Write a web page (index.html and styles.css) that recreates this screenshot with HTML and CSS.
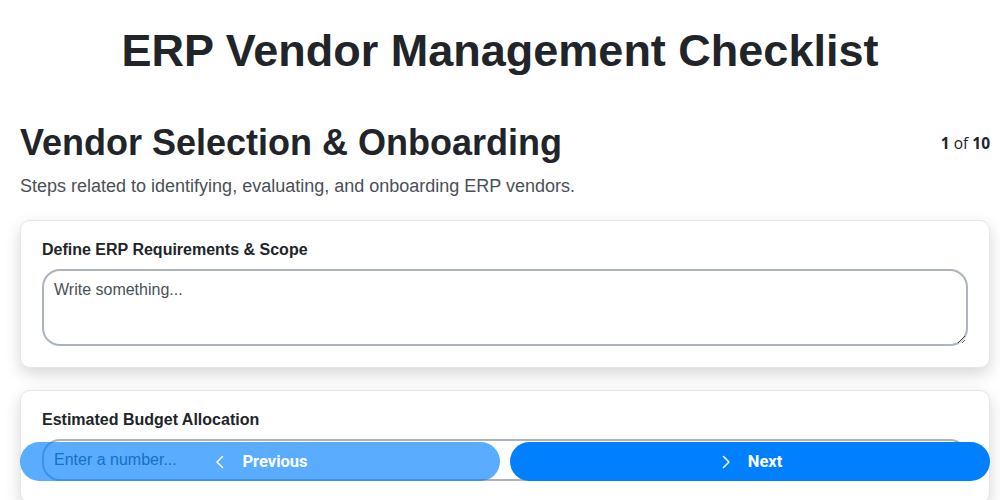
FILE: index.html
```html
<!DOCTYPE html>
<html lang="en">
<head>
<meta charset="utf-8">
<title>ERP Vendor Management Checklist</title>
<link rel="stylesheet" href="styles.css">
</head>
<body>
<div class="page">
  <h1 class="title">ERP Vendor Management Checklist</h1>
  <div class="section-head">
    <h2 class="section-title">Vendor Selection &amp; Onboarding</h2>
    <div class="counter"><b>1</b> of <b>10</b></div>
  </div>
  <p class="section-desc">Steps related to identifying, evaluating, and onboarding ERP vendors.</p>
  <div class="card">
    <label class="field-label">Define ERP Requirements &amp; Scope</label>
    <textarea class="textarea" placeholder="Write something..."></textarea>
  </div>
  <div class="card">
    <label class="field-label">Estimated Budget Allocation</label>
    <input class="input" type="text" placeholder="Enter a number...">
  </div>
</div>
<div class="nav">
  <button class="btn btn-prev"><svg class="chev" viewBox="0 0 16 16" width="16" height="16"><path d="M10.5 2.5 5 8l5.5 5.5" fill="none" stroke="currentColor" stroke-width="1.5" stroke-linecap="round" stroke-linejoin="round"/></svg><span>Previous</span></button>
  <button class="btn btn-next"><svg class="chev" viewBox="0 0 16 16" width="16" height="16"><path d="M5.5 2.5 11 8l-5.5 5.5" fill="none" stroke="currentColor" stroke-width="1.5" stroke-linecap="round" stroke-linejoin="round"/></svg><span>Next</span></button>
</div>
</body>
</html>
```

FILE: styles.css
```css
* { box-sizing: border-box; }
html, body { margin: 0; padding: 0; background: #fff; }
body {
  font-family: "Liberation Sans", Arial, sans-serif;
  color: #212529;
  overflow: hidden;
  height: 500px;
}
.page { padding: 0 10px 0 20px; }
.title {
  margin: 0 0 0 -10px;
  padding-top: 26px;
  text-align: center;
  font-size: 45px;
  line-height: 50px;
  font-weight: 700;
  color: #212529;
}
.section-head {
  margin-top: 47px;
  display: flex;
  justify-content: space-between;
  align-items: center;
}
.section-title {
  margin: 0;
  font-size: 36px;
  line-height: 40px;
  font-weight: 700;
  color: #212529;
}
.counter {
  font-family: "Open Sans", sans-serif;
  font-size: 15.5px;
  color: #212529;
}
.counter b { font-weight: 700; }
.section-desc {
  margin: 11px 0 0;
  font-size: 18px;
  line-height: 24px;
  color: #495057;
}
.card {
  margin-top: 22px;
  background: #fff;
  border: 1px solid #e6e7ec;
  border-radius: 10px;
  box-shadow: 0 6px 16px rgba(0,0,0,0.16);
  padding: 19px 21px 21px;
  display: flex;
  flex-direction: column;
}
.card + .card { margin-top: 22px; }
.field-label {
  font-size: 16px;
  line-height: 20px;
  font-weight: 700;
  color: #212529;
  margin-bottom: 9px;
}
.textarea, .input {
  width: 100%;
  font-family: "Liberation Sans", Arial, sans-serif;
  font-size: 16px;
  color: #212529;
  border: 2px solid #adb4bc;
  border-radius: 18px;
  padding: 10px 10px;
  background: #fff;
  outline: none;
}
.textarea { height: 77px; resize: vertical; }
.input { height: 42px; }
.textarea::placeholder, .input::placeholder { color: #495057; opacity: 1; }
.nav {
  position: fixed;
  left: 20px;
  right: 10px;
  bottom: 19px;
  display: flex;
  gap: 10px;
}
.btn {
  flex: 1;
  height: 39px;
  border: none;
  border-radius: 20px;
  color: #fff;
  font-family: Roboto, "Liberation Sans", sans-serif;
  font-size: 16.5px;
  font-weight: 700;
  display: flex;
  align-items: center;
  justify-content: center;
  gap: 14px;
  cursor: pointer;
}
.btn-prev { background: #0080ff; opacity: 0.65; }
.btn-next { background: #0080ff; }
.chev { display: block; }
```
